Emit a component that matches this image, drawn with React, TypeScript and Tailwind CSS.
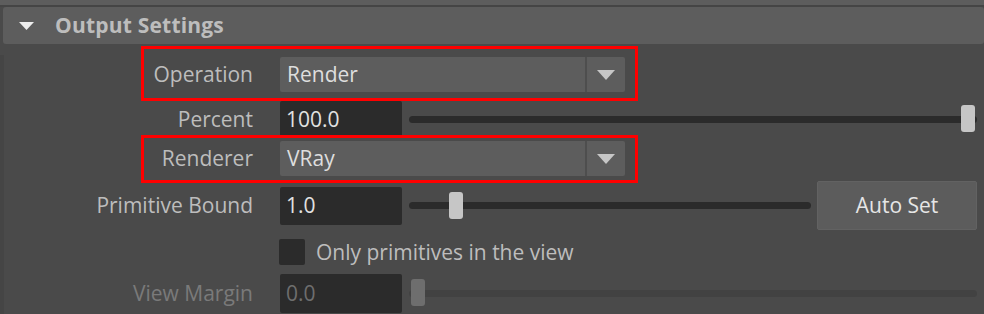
import type { ReactNode } from "react";

function Label({ children, dim }: { children: ReactNode; dim?: boolean }) {
  return (
    <div className={`w-[249px] shrink-0 text-right ${dim ? "text-[#7a7a7a]" : "text-[#bdbdbd]"}`}>{children}</div>
  );
}

function Dropdown({ value }: { value: string }) {
  return (
    <div className="ml-[27px] flex h-[35px] w-[345px] rounded-[2px] bg-[#5d5d5d]">
      <div className="flex flex-1 items-center pl-[7px] text-[#dedede]">{value}</div>
      <div className="w-[2px] bg-[#4e4e4e]" />
      <div className="flex w-[38px] items-center justify-center">
        <svg width="18" height="10" viewBox="0 0 18 10">
          <polygon points="0,0 18,0 9,10" fill="#c6c6c6" />
        </svg>
      </div>
    </div>
  );
}

function Field({ value, dim, h = "h-[38px]" }: { value: string; dim?: boolean; h?: string }) {
  return (
    <div
      className={`ml-[27px] flex ${h} w-[122px] shrink-0 items-center rounded-[2px] bg-[#2b2b2b] pl-[6px] ${dim ? "text-[#6e6e6e]" : "text-[#e2e2e2]"}`}
    >
      {value}
    </div>
  );
}

function Slider({ pos, dim }: { pos: number; dim?: boolean }) {
  return (
    <div className="relative ml-[7px] flex h-[28px] flex-1 items-center">
      <div className={`h-[7px] w-full rounded-full ${dim ? "bg-[#424242]" : "bg-[#2b2b2b]"}`} />
      <div
        className={`absolute top-0 h-[27px] w-[14px] rounded-[3px] ${dim ? "bg-[#6e6e6e]" : "bg-[#c6c6c6]"}`}
        style={{ left: pos }}
      />
    </div>
  );
}

function RedBox({ top, height }: { top: number; height: number }) {
  return (
    <div
      className="pointer-events-none absolute left-[137px] w-[497px] border-[3px] border-[#ff0000]"
      style={{ top, height }}
    />
  );
}

export default function App() {
  return (
    <div className="h-[314px] w-[984px] overflow-hidden bg-[#4a4a4a] font-['Open_Sans',sans-serif] text-[21px] leading-none">
      <div className="h-[5px] bg-[#5d5d5d]" />
      <div className="h-[2px] bg-[#454545]" />
      <div className="ml-[3px] flex h-[37px] items-center rounded-[3px] bg-[#5d5d5d]">
        <svg className="ml-[16px]" width="15" height="8" viewBox="0 0 15 8">
          <polygon points="0,0 15,0 7.5,8" fill="#ededed" />
        </svg>
        <span className="ml-[21px] text-[21px] font-bold tracking-[0.2px] text-[#bdbdbd]">Output Settings</span>
      </div>

      <div className="border-l-[4px] border-[#454545]">
        <div className="relative mt-[11px] flex h-[39px] items-center">
          <Label>Operation</Label>
          <Dropdown value="Render" />
          <RedBox top={-9} height={55} />
        </div>

        <div className="mt-[5px] flex h-[40px] items-center pr-[7px]">
          <Label>Percent</Label>
          <Field value="100.0" h="h-[37px]" />
          <Slider pos={552} />
        </div>

        <div className="relative flex h-[39px] items-center">
          <Label>Renderer</Label>
          <Dropdown value="VRay" />
          <RedBox top={-4} height={48} />
        </div>

        <div className="mt-[3px] flex h-[49px] items-center pr-[7px]">
          <Label>Primitive Bound</Label>
          <Field value="1.0" />
          <Slider pos={40} />
          <button className="ml-[6px] flex h-[49px] w-[160px] items-center justify-center rounded-[2px] border border-[#626262] bg-[#5c5c5c] text-[#e6e6e6]">
            Auto Set
          </button>
        </div>

        <div className="mt-[2px] flex h-[40px] items-center">
          <div className="ml-[275px] h-[26px] w-[26px] rounded-[2px] bg-[#2b2b2b]" />
          <span className="ml-[11px] text-[#bdbdbd]">Only primitives in the view</span>
        </div>

        <div className="flex h-[42px] items-center pr-[7px]">
          <Label dim>View Margin</Label>
          <Field value="0.0" dim h="h-[39px]" />
          <Slider pos={2} dim />
        </div>
      </div>
    </div>
  );
}
